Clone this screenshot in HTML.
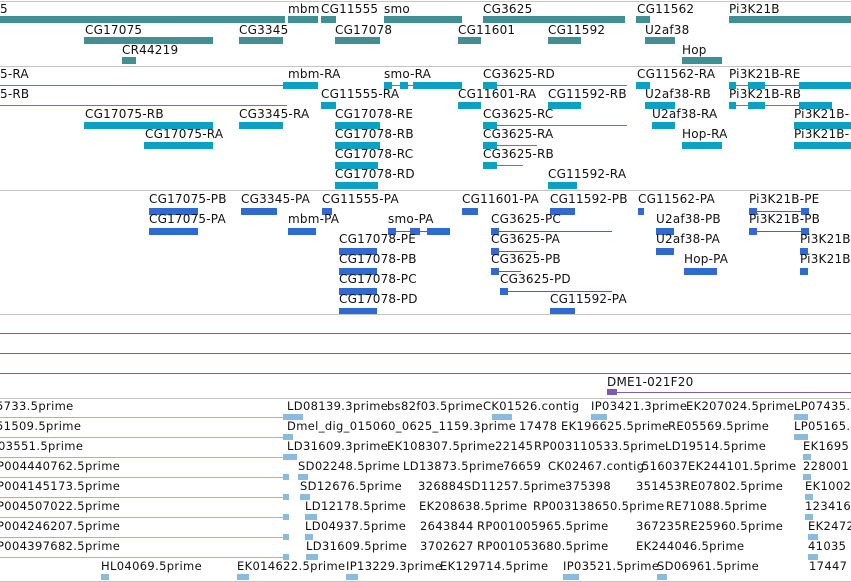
<!DOCTYPE html>
<html><head><meta charset="utf-8"><style>
body{margin:0;width:851px;height:582px;overflow:hidden;background:#fff;position:relative;font-family:"DejaVu Sans","Liberation Sans",sans-serif;}
div{position:absolute;}
.t{font-size:12px;line-height:13px;color:#111;white-space:nowrap;letter-spacing:0.2px;}
.e{font-size:11.5px;line-height:13px;color:#111;white-space:nowrap;letter-spacing:0.35px;}
.g{height:1px;left:0;width:851px;background:#c4c4c4;}
.p{height:1px;left:0;width:851px;background:#7a5cb0;}
.a{background:#3f8f93;height:7px;}
.c{background:#0aa2c0;height:7px;}
.cl{background:#0aa2c0;height:1px;}
.d{background:#3069d0;height:7px;}
.dl{background:#3069d0;height:1px;}
.f{background:#88bbdd;height:6px;}
.fl{background:#88bbdd;height:1px;}
</style></head><body>
<div class="g" style="top:1px"></div>
<div class="t" style="left:0;top:3px">5</div>
<div class="t" style="left:288px;top:3px">mbm</div>
<div class="t" style="left:321px;top:3px">CG11555</div>
<div class="t" style="left:384px;top:3px">smo</div>
<div class="t" style="left:483px;top:3px">CG3625</div>
<div class="t" style="left:637px;top:3px">CG11562</div>
<div class="t" style="left:729px;top:3px">Pi3K21B</div>
<div class="a" style="left:0;width:285px;top:16px"></div>
<div class="a" style="left:288px;width:30px;top:16px"></div>
<div class="a" style="left:321px;width:15px;top:16px"></div>
<div class="a" style="left:384px;width:78px;top:16px"></div>
<div class="a" style="left:483px;width:142px;top:16px"></div>
<div class="a" style="left:636px;width:14px;top:16px"></div>
<div class="a" style="left:729px;width:122px;top:16px"></div>
<div class="t" style="left:85px;top:24px">CG17075</div>
<div class="t" style="left:239px;top:24px">CG3345</div>
<div class="t" style="left:335px;top:24px">CG17078</div>
<div class="t" style="left:458px;top:24px">CG11601</div>
<div class="t" style="left:548px;top:24px">CG11592</div>
<div class="t" style="left:645px;top:24px">U2af38</div>
<div class="a" style="left:84px;width:129px;top:37px"></div>
<div class="a" style="left:239px;width:44px;top:37px"></div>
<div class="a" style="left:335px;width:45px;top:37px"></div>
<div class="a" style="left:458px;width:23px;top:37px"></div>
<div class="a" style="left:548px;width:33px;top:37px"></div>
<div class="a" style="left:645px;width:30px;top:37px"></div>
<div class="t" style="left:122px;top:44px">CR44219</div>
<div class="t" style="left:682px;top:44px">Hop</div>
<div class="a" style="left:122px;width:14px;top:57px"></div>
<div class="a" style="left:682px;width:40px;top:57px"></div>
<div class="g" style="top:66px"></div>
<div class="t" style="left:0;top:68px">5-RA</div>
<div class="t" style="left:288px;top:68px">mbm-RA</div>
<div class="t" style="left:384px;top:68px">smo-RA</div>
<div class="t" style="left:483px;top:68px">CG3625-RD</div>
<div class="t" style="left:637px;top:68px">CG11562-RA</div>
<div class="t" style="left:729px;top:68px">Pi3K21B-RE</div>
<div class="cl" style="left:0;width:285px;top:85px"></div>
<div class="c" style="left:283px;width:35px;top:82px"></div>
<div class="cl" style="left:384px;width:78px;top:85px"></div>
<div class="c" style="left:384px;width:8px;top:82px"></div>
<div class="c" style="left:400px;width:8px;top:82px"></div>
<div class="c" style="left:413px;width:12px;top:82px"></div>
<div class="c" style="left:425px;width:37px;top:82px"></div>
<div class="cl" style="left:483px;width:144px;top:85px"></div>
<div class="c" style="left:483px;width:14px;top:82px"></div>
<div class="c" style="left:636px;width:14px;top:82px"></div>
<div class="cl" style="left:729px;width:122px;top:85px"></div>
<div class="c" style="left:729px;width:7px;top:82px"></div>
<div class="c" style="left:748px;width:17px;top:82px"></div>
<div class="c" style="left:799px;width:52px;top:82px"></div>
<div class="t" style="left:0;top:88px">5-RB</div>
<div class="t" style="left:321px;top:88px">CG11555-RA</div>
<div class="t" style="left:458px;top:88px">CG11601-RA</div>
<div class="t" style="left:548px;top:88px">CG11592-RB</div>
<div class="t" style="left:645px;top:88px">U2af38-RB</div>
<div class="t" style="left:729px;top:88px">Pi3K21B-RB</div>
<div class="cl" style="left:0;width:287px;top:105px"></div>
<div class="c" style="left:321px;width:15px;top:102px"></div>
<div class="c" style="left:458px;width:23px;top:102px"></div>
<div class="c" style="left:548px;width:33px;top:102px"></div>
<div class="c" style="left:645px;width:30px;top:102px"></div>
<div class="cl" style="left:729px;width:103px;top:105px"></div>
<div class="c" style="left:729px;width:7px;top:102px"></div>
<div class="c" style="left:748px;width:17px;top:102px"></div>
<div class="c" style="left:799px;width:33px;top:102px"></div>
<div class="t" style="left:85px;top:108px">CG17075-RB</div>
<div class="t" style="left:239px;top:108px">CG3345-RA</div>
<div class="t" style="left:335px;top:108px">CG17078-RE</div>
<div class="t" style="left:483px;top:108px">CG3625-RC</div>
<div class="t" style="left:652px;top:108px">U2af38-RA</div>
<div class="t" style="left:794px;top:108px">Pi3K21B-</div>
<div class="c" style="left:84px;width:129px;top:122px"></div>
<div class="c" style="left:239px;width:44px;top:122px"></div>
<div class="c" style="left:335px;width:45px;top:122px"></div>
<div class="cl" style="left:483px;width:144px;top:125px"></div>
<div class="c" style="left:483px;width:14px;top:122px"></div>
<div class="c" style="left:652px;width:23px;top:122px"></div>
<div class="c" style="left:794px;width:57px;top:122px"></div>
<div class="t" style="left:145px;top:128px">CG17075-RA</div>
<div class="t" style="left:335px;top:128px">CG17078-RB</div>
<div class="t" style="left:483px;top:128px">CG3625-RA</div>
<div class="t" style="left:682px;top:128px">Hop-RA</div>
<div class="t" style="left:794px;top:128px">Pi3K21B-</div>
<div class="c" style="left:144px;width:69px;top:142px"></div>
<div class="c" style="left:335px;width:45px;top:142px"></div>
<div class="cl" style="left:483px;width:54px;top:145px"></div>
<div class="c" style="left:483px;width:14px;top:142px"></div>
<div class="c" style="left:682px;width:40px;top:142px"></div>
<div class="c" style="left:794px;width:57px;top:142px"></div>
<div class="t" style="left:335px;top:148px">CG17078-RC</div>
<div class="t" style="left:483px;top:148px">CG3625-RB</div>
<div class="c" style="left:335px;width:43px;top:162px"></div>
<div class="cl" style="left:483px;width:40px;top:165px"></div>
<div class="c" style="left:483px;width:14px;top:162px"></div>
<div class="t" style="left:335px;top:168px">CG17078-RD</div>
<div class="t" style="left:548px;top:168px">CG11592-RA</div>
<div class="c" style="left:335px;width:43px;top:182px"></div>
<div class="c" style="left:548px;width:29px;top:182px"></div>
<div class="g" style="top:190px"></div>
<div class="t" style="left:149px;top:193px">CG17075-PB</div>
<div class="t" style="left:241px;top:193px">CG3345-PA</div>
<div class="t" style="left:322px;top:193px">CG11555-PA</div>
<div class="t" style="left:462px;top:193px">CG11601-PA</div>
<div class="t" style="left:550px;top:193px">CG11592-PB</div>
<div class="t" style="left:638px;top:193px">CG11562-PA</div>
<div class="t" style="left:749px;top:193px">Pi3K21B-PE</div>
<div class="d" style="left:149px;width:49px;top:208px"></div>
<div class="d" style="left:241px;width:36px;top:208px"></div>
<div class="d" style="left:322px;width:10px;top:208px"></div>
<div class="d" style="left:462px;width:16px;top:208px"></div>
<div class="d" style="left:550px;width:25px;top:208px"></div>
<div class="d" style="left:638px;width:6px;top:208px"></div>
<div class="dl" style="left:749px;width:60px;top:211px"></div>
<div class="d" style="left:749px;width:8px;top:208px"></div>
<div class="d" style="left:801px;width:8px;top:208px"></div>
<div class="t" style="left:149px;top:213px">CG17075-PA</div>
<div class="t" style="left:288px;top:213px">mbm-PA</div>
<div class="t" style="left:388px;top:213px">smo-PA</div>
<div class="t" style="left:491px;top:213px">CG3625-PC</div>
<div class="t" style="left:656px;top:213px">U2af38-PB</div>
<div class="t" style="left:749px;top:213px">Pi3K21B-PB</div>
<div class="d" style="left:149px;width:49px;top:228px"></div>
<div class="d" style="left:288px;width:28px;top:228px"></div>
<div class="dl" style="left:388px;width:62px;top:231px"></div>
<div class="d" style="left:388px;width:8px;top:228px"></div>
<div class="d" style="left:410px;width:10px;top:228px"></div>
<div class="d" style="left:427px;width:23px;top:228px"></div>
<div class="dl" style="left:491px;width:121px;top:231px"></div>
<div class="d" style="left:491px;width:8px;top:228px"></div>
<div class="d" style="left:656px;width:18px;top:228px"></div>
<div class="dl" style="left:749px;width:60px;top:231px"></div>
<div class="d" style="left:749px;width:8px;top:228px"></div>
<div class="d" style="left:801px;width:8px;top:228px"></div>
<div class="t" style="left:339px;top:233px">CG17078-PE</div>
<div class="t" style="left:491px;top:233px">CG3625-PA</div>
<div class="t" style="left:656px;top:233px">U2af38-PA</div>
<div class="t" style="left:800px;top:233px">Pi3K21B-</div>
<div class="d" style="left:339px;width:38px;top:248px"></div>
<div class="dl" style="left:491px;width:45px;top:251px"></div>
<div class="d" style="left:491px;width:8px;top:248px"></div>
<div class="d" style="left:656px;width:18px;top:248px"></div>
<div class="d" style="left:800px;width:8px;top:248px"></div>
<div class="t" style="left:339px;top:253px">CG17078-PB</div>
<div class="t" style="left:491px;top:253px">CG3625-PB</div>
<div class="t" style="left:684px;top:253px">Hop-PA</div>
<div class="t" style="left:800px;top:253px">Pi3K21B-</div>
<div class="d" style="left:339px;width:38px;top:268px"></div>
<div class="dl" style="left:491px;width:30px;top:271px"></div>
<div class="d" style="left:491px;width:8px;top:268px"></div>
<div class="d" style="left:684px;width:33px;top:268px"></div>
<div class="d" style="left:800px;width:8px;top:268px"></div>
<div class="t" style="left:339px;top:273px">CG17078-PC</div>
<div class="t" style="left:500px;top:273px">CG3625-PD</div>
<div class="d" style="left:339px;width:38px;top:288px"></div>
<div class="dl" style="left:500px;width:112px;top:291px"></div>
<div class="d" style="left:500px;width:8px;top:288px"></div>
<div class="t" style="left:339px;top:293px">CG17078-PD</div>
<div class="t" style="left:550px;top:293px">CG11592-PA</div>
<div class="d" style="left:339px;width:38px;top:308px"></div>
<div class="d" style="left:550px;width:25px;top:308px"></div>
<div class="g" style="top:314px"></div>
<div class="p" style="top:333px"></div>
<div class="p" style="top:353px"></div>
<div class="p" style="top:373px"></div>
<div class="t" style="left:607px;top:376px">DME1-021F20</div>
<div style="left:607px;width:244px;height:1px;top:392px;background:#7a5cb0"></div>
<div style="left:607px;width:10px;height:6px;top:389px;background:#7a5cb0"></div>
<div class="g" style="top:398px"></div>
<div class="e" style="left:-4px;top:400px">5733.5prime</div>
<div class="e" style="left:287px;top:400px">LD08139.3prime</div>
<div class="e" style="left:387px;top:400px">bs82f03.5prime</div>
<div class="e" style="left:483px;top:400px">CK01526.contig</div>
<div class="e" style="left:591px;top:400px">IP03421.3prime</div>
<div class="e" style="left:686px;top:400px">EK207024.5prime</div>
<div class="e" style="left:794px;top:400px">LP07435.</div>
<div class="e" style="left:-4px;top:420px">51509.5prime</div>
<div class="e" style="left:287px;top:420px">Dmel_dig_015060_0625_1159.3prime</div>
<div class="e" style="left:519px;top:420px">17478</div>
<div class="e" style="left:561px;top:420px">EK196625.5prime</div>
<div class="e" style="left:668px;top:420px">RE05569.5prime</div>
<div class="e" style="left:794px;top:420px">LP05165.</div>
<div class="e" style="left:-2px;top:440px">03551.5prime</div>
<div class="e" style="left:287px;top:440px">LD31609.3prime</div>
<div class="e" style="left:387px;top:440px">EK108307.5prime</div>
<div class="e" style="left:495px;top:440px">22145</div>
<div class="e" style="left:534px;top:440px">RP003110533.5prime</div>
<div class="e" style="left:665px;top:440px">LD19514.5prime</div>
<div class="e" style="left:803px;top:440px">EK1695</div>
<div class="e" style="left:-3px;top:460px">P004440762.5prime</div>
<div class="e" style="left:298px;top:460px">SD02248.5prime</div>
<div class="e" style="left:403px;top:460px">LD13873.5prime</div>
<div class="e" style="left:503px;top:460px">76659</div>
<div class="e" style="left:548px;top:460px">CK02467.contig</div>
<div class="e" style="left:642px;top:460px">516037</div>
<div class="e" style="left:688px;top:460px">EK244101.5prime</div>
<div class="e" style="left:803px;top:460px">228001</div>
<div class="e" style="left:-3px;top:480px">P004145173.5prime</div>
<div class="e" style="left:300px;top:480px">SD12676.5prime</div>
<div class="e" style="left:418px;top:480px">326884</div>
<div class="e" style="left:464px;top:480px">SD11257.5prime</div>
<div class="e" style="left:565px;top:480px">375398</div>
<div class="e" style="left:636px;top:480px">351453</div>
<div class="e" style="left:682px;top:480px">RE07802.5prime</div>
<div class="e" style="left:805px;top:480px">EK1002</div>
<div class="e" style="left:-3px;top:500px">P004507022.5prime</div>
<div class="e" style="left:305px;top:500px">LD12178.5prime</div>
<div class="e" style="left:419px;top:500px">EK208638.5prime</div>
<div class="e" style="left:533px;top:500px">RP003138650.5prime</div>
<div class="e" style="left:666px;top:500px">RE71088.5prime</div>
<div class="e" style="left:805px;top:500px">123416</div>
<div class="e" style="left:-3px;top:520px">P004246207.5prime</div>
<div class="e" style="left:305px;top:520px">LD04937.5prime</div>
<div class="e" style="left:420px;top:520px">2643844</div>
<div class="e" style="left:477px;top:520px">RP001005965.5prime</div>
<div class="e" style="left:636px;top:520px">367235</div>
<div class="e" style="left:682px;top:520px">RE25960.5prime</div>
<div class="e" style="left:808px;top:520px">EK2472</div>
<div class="e" style="left:-3px;top:540px">P004397682.5prime</div>
<div class="e" style="left:306px;top:540px">LD31609.5prime</div>
<div class="e" style="left:420px;top:540px">3702627</div>
<div class="e" style="left:477px;top:540px">RP001053680.5prime</div>
<div class="e" style="left:636px;top:540px">EK244046.5prime</div>
<div class="e" style="left:808px;top:540px">41035</div>
<div class="e" style="left:101px;top:560px">HL04069.5prime</div>
<div class="e" style="left:237px;top:560px">EK014622.5prime</div>
<div class="e" style="left:346px;top:560px">IP13229.3prime</div>
<div class="e" style="left:440px;top:560px">EK129714.5prime</div>
<div class="e" style="left:563px;top:560px">IP03521.5prime</div>
<div class="e" style="left:657px;top:560px">SD06961.5prime</div>
<div class="e" style="left:809px;top:560px">17447</div>
<div class="fl" style="left:0;width:287px;top:417px"></div>
<div class="fl" style="left:0;width:287px;top:437px"></div>
<div class="fl" style="left:0;width:287px;top:457px"></div>
<div class="fl" style="left:0;width:287px;top:477px"></div>
<div class="fl" style="left:0;width:287px;top:497px"></div>
<div class="fl" style="left:0;width:287px;top:517px"></div>
<div class="fl" style="left:0;width:287px;top:537px"></div>
<div class="fl" style="left:0;width:287px;top:557px"></div>
<div class="f" style="left:283px;width:20px;top:414px"></div>
<div class="f" style="left:283px;width:10px;top:434px"></div>
<div class="f" style="left:283px;width:14px;top:454px"></div>
<div class="f" style="left:283px;width:6px;top:474px"></div>
<div class="f" style="left:283px;width:6px;top:494px"></div>
<div class="f" style="left:283px;width:6px;top:514px"></div>
<div class="f" style="left:283px;width:6px;top:534px"></div>
<div class="f" style="left:283px;width:6px;top:554px"></div>
<div class="f" style="left:492px;width:20px;top:414px"></div>
<div class="f" style="left:591px;width:16px;top:414px"></div>
<div class="f" style="left:794px;width:14px;top:414px"></div>
<div class="f" style="left:794px;width:14px;top:434px"></div>
<div class="f" style="left:803px;width:8px;top:454px"></div>
<div class="f" style="left:803px;width:8px;top:474px"></div>
<div class="f" style="left:805px;width:8px;top:494px"></div>
<div class="f" style="left:805px;width:8px;top:514px"></div>
<div class="f" style="left:808px;width:10px;top:534px"></div>
<div class="f" style="left:808px;width:10px;top:554px"></div>
<div class="f" style="left:298px;width:10px;top:474px"></div>
<div class="f" style="left:300px;width:10px;top:494px"></div>
<div class="f" style="left:305px;width:12px;top:514px"></div>
<div class="f" style="left:305px;width:8px;top:534px"></div>
<div class="f" style="left:306px;width:12px;top:554px"></div>
<div class="f" style="left:101px;width:8px;top:574px"></div>
<div class="f" style="left:237px;width:12px;top:574px"></div>
<div class="f" style="left:346px;width:12px;top:574px"></div>
<div class="f" style="left:563px;width:16px;top:574px"></div>
<div class="f" style="left:657px;width:10px;top:574px"></div>
<div class="g" style="top:581px"></div>
</body></html>
